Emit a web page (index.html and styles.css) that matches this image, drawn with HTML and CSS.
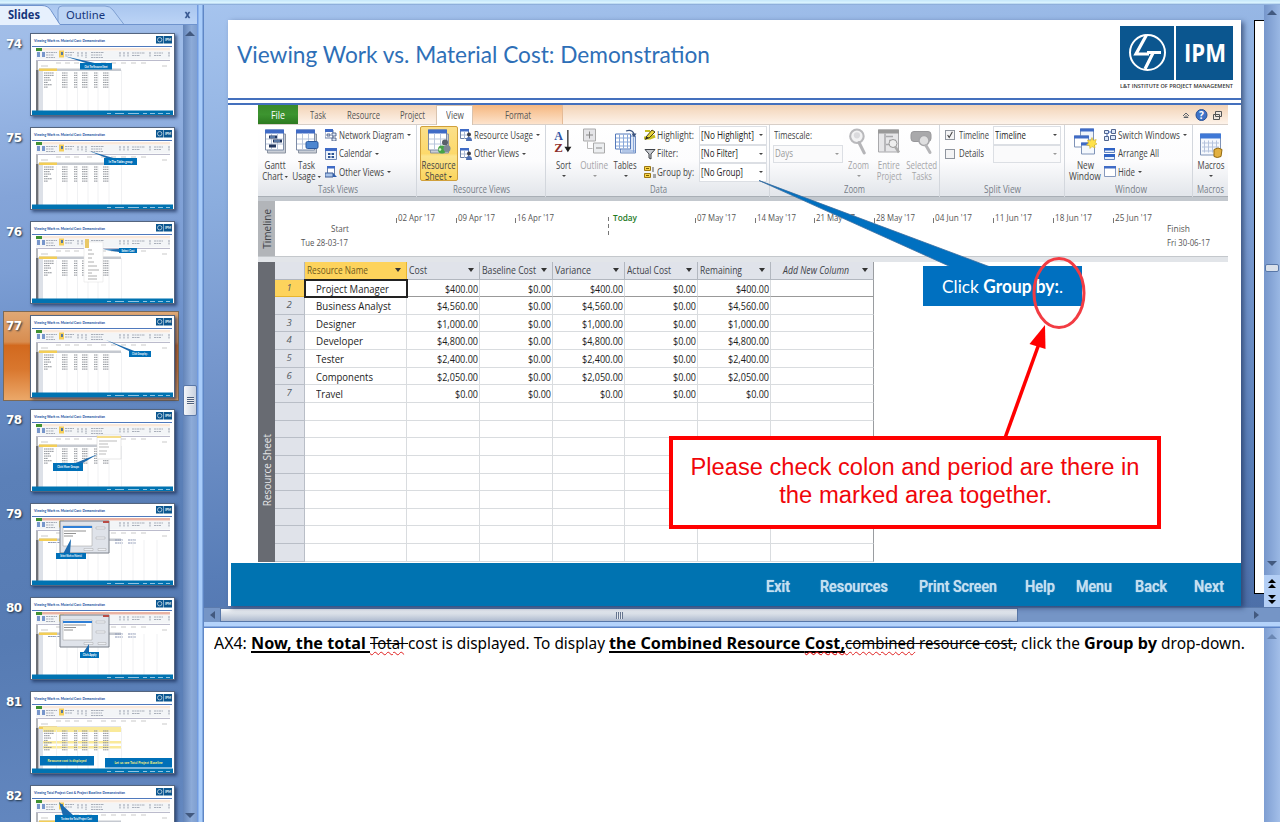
FILE: index.html
```html
<!DOCTYPE html>
<html lang="en">
<head>
<meta charset="utf-8">
<title>Presentation editor</title>
<link rel="stylesheet" href="styles.css">
</head>
<body>
<svg class="defs" width="0" height="0">
  <defs>
    <symbol id="sheet" viewBox="0 0 24 26"><path d="M3.500 5.500h18v19h-18z" fill="#c9ced6" stroke="#8b93a0"/><path d="M1.500 1.500h18v20h-18z" fill="#fff" stroke="#7c8ba6"/><path d="M1 1h19v4H1z" fill="#3f6bc6"/><path d="M7.500 5v16M13.500 5v16M2 10.500h17M2 15.500h17" stroke="#b9c6dc"/></symbol>
    <symbol id="gantt" viewBox="0 0 24 26"><use href="#sheet"/><path d="M5 7h8v3H5zM9 11h9v3H9zM5 16h7v3H5z" fill="#22365e"/><path d="M6 8h5v1H6zM10 12h6v1h-6z" fill="#8fb8ea"/></symbol>
    <symbol id="usage" viewBox="0 0 24 26"><use href="#sheet"/><rect x="11" y="13" width="12" height="7" rx="1.500" fill="#4d86d0" stroke="#2c5a9f"/></symbol>
    <symbol id="ressheet" viewBox="0 0 24 26"><use href="#sheet"/><circle cx="18" cy="14" r="3" fill="#59606b"/><circle cx="15" cy="21" r="4" fill="#47a447"/><circle cx="20" cy="20" r="3.500" fill="#7d8895"/><circle cx="13" cy="21" r="1.300" fill="#d6f0d0"/></symbol>
    <symbol id="net" viewBox="0 0 12 12"><path d="M0 1h8v8H0z" fill="#fff" stroke="#6a7fa5"/><path d="M0 0h8v3H0z" fill="#3f6bc6"/><path d="M2 5h3v2H2zM7 4h4v3H7zM7 9h4v3H7z" fill="#dfe8f6" stroke="#3a4f78" stroke-width=".8"/></symbol>
    <symbol id="cal" viewBox="0 0 12 12"><path d="M.500.500h11v11H.500z" fill="#e9f0fa" stroke="#7289b5"/><path d="M0 0h12v3H0z" fill="#3f6bc6"/><path d="M3 5h6v5H3z" fill="#2d5595"/><path d="M6 4v7M2 7.500h8" stroke="#fff"/></symbol>
    <symbol id="oth" viewBox="0 0 12 12"><path d="M2.500.500h7v9h-7z" fill="#fff" stroke="#6a7fa5"/><path d="M2 0h8v2.500H2z" fill="#3f6bc6"/><path d="M0 7h8v4H0z" fill="#a9c4ea" stroke="#3a5b95"/><path d="M8 7l4 4H8z" fill="#2e5fae"/></symbol>
    <symbol id="resv" viewBox="0 0 12 12"><path d="M.500.500h8v9h-8z" fill="#fff" stroke="#6a7fa5"/><path d="M0 0h9v2.500H0z" fill="#3f6bc6"/><path d="M4.500 3v7M1 6h7" stroke="#a9b8d3"/><circle cx="9" cy="5.500" r="2" fill="#3a3d49"/><path d="M6 12q0-4 3-4t3 4z" fill="#4d6fb3"/></symbol>
    <symbol id="sort" viewBox="0 0 20 28"><text x="0" y="12" font-size="14" font-weight="bold" font-family="Liberation Serif,serif" fill="#2f55a4" textLength="9" lengthAdjust="spacingAndGlyphs">A</text><text x="0" y="25" font-size="14" font-weight="bold" font-family="Liberation Serif,serif" fill="#8d2f2c" textLength="9" lengthAdjust="spacingAndGlyphs">Z</text><path d="M14 2v20M11.500 20l2.500 4 2.500-4z" stroke="#222" stroke-width="1.300"/></symbol>
    <symbol id="outl" viewBox="0 0 24 26"><path d="M.500.500h12v12H.500z" fill="#e5e5e8" stroke="#aaa"/><path d="M6.500 3v7M3 6.500h7" stroke="#888"/><path d="M10.500 14.500h11v10h-11z" fill="#eceef0" stroke="#aaa"/><path d="M13 19.500h6" stroke="#888"/><path d="M4.500 13v7h5" stroke="#bbb" fill="none"/></symbol>
    <symbol id="tabl" viewBox="0 0 24 26"><path d="M6.500 7.500h15v17h-15z" fill="#dce6f6" stroke="#6f8cc0"/><path d="M1.500 5.500h15v15h-15z" fill="#fff" stroke="#5379bb"/><path d="M5.500 6v14M9.500 6v14M13.500 6v14M2 9.500h14M2 13.500h14M2 17.500h14M19.500 9v15M8 22.500h13" stroke="#88a7d9"/><path d="M12 2.500q6-2 8 3" fill="none" stroke="#3c547e" stroke-width="1.300"/><path d="M17.500 5h5L20 9z" fill="#3c547e"/></symbol>
    <symbol id="hil" viewBox="0 0 12 12"><path d="M0 9h6l5-2" stroke="#c9bf22" stroke-width="3" fill="none"/><path d="M2 8l6-7 3 2-6 6z" fill="#e8d43a" stroke="#4e4614"/><path d="M2 8l3 1-4 2z" fill="#222"/><path d="M1 2h5" stroke="#c9bf22" stroke-width="2"/></symbol>
    <symbol id="fun" viewBox="0 0 12 12"><path d="M1 1.500h10L7 6v5l-2-1V6z" fill="#c9ccd1" stroke="#3f4349"/></symbol>
    <symbol id="grp" viewBox="0 0 12 12"><path d="M.500.500h6v4h-6zM.500 7.500h6v4h-6z" fill="#f7d44a" stroke="#9c7712"/><path d="M2 2.500h3M2 9.500h3" stroke="#7a5a00"/><path d="M9 1v5M9 9h3M9 11h3" stroke="#555"/></symbol>
    <symbol id="zoo" viewBox="0 0 22 26"><circle cx="9" cy="8" r="6.500" fill="#f2f2f3" stroke="#b9b9bc" stroke-width="2"/><circle cx="9" cy="7" r="3" fill="#dadadd"/><path d="M11 14l5 10" stroke="#b5b5b8" stroke-width="3" stroke-linecap="round"/></symbol>
    <symbol id="ent" viewBox="0 0 24 26"><path d="M1.500 1.500h20v22h-20z" fill="#e6e6e8" stroke="#a9a9ac"/><path d="M1 1h21v4H1z" fill="#999"/><path d="M8 5v18M9 8h7M12 12h7M9 16h7" stroke="#a9a9ac" stroke-width="1.500"/><circle cx="16" cy="15" r="4" fill="#eee" stroke="#999"/><path d="M18 18l4 6" stroke="#aaa" stroke-width="2.500"/></symbol>
    <symbol id="sel" viewBox="0 0 24 26"><rect x="1" y="3" width="20" height="10" rx="3" fill="#a9a9ab" stroke="#98989b"/><circle cx="14" cy="12" r="5" fill="#dfdfe0" stroke="#a5a5a8" stroke-width="1.500"/><path d="M16 17l4 7" stroke="#b5b5b8" stroke-width="3" stroke-linecap="round"/></symbol>
    <symbol id="neww" viewBox="0 0 24 26"><path d="M7.500.500h13v11h-13z" fill="#eef3fb" stroke="#7f93b7"/><path d="M7 0h14v3H7z" fill="#3f6bc6"/><path d="M1.500 7.500h14v11h-14z" fill="#fff" stroke="#7f93b7"/><path d="M1 7h15v3H1z" fill="#3f6bc6"/><path d="M8.500 14.500h13v11h-13z" fill="#f4f8fd" stroke="#7f93b7"/><path d="M8 14h14v3H8z" fill="#3f6bc6"/><path d="M19 9l1.200 3 3-1-1 3 1.800 1.500-2.500 1 .500 3-3-1.500-2 2-.500-3-3-.500 2-2-1-3 3 1z" fill="#ffe24a" stroke="#d4b026" stroke-width=".6"/></symbol>
    <symbol id="sww" viewBox="0 0 12 12"><path d="M.500 1.500h4v3h-4zM7.500.500h4v4h-4zM.500 7.500h4v4h-4zM6.500 6.500h5v4h-5z" fill="#dce8fa" stroke="#50648e"/><path d="M4 3h3M3 5v2" stroke="#3f6bc6"/></symbol>
    <symbol id="arr" viewBox="0 0 12 12"><path d="M.500.500h10v4h-10zM.500 6.500h10v5h-10z" fill="#e9f1fc" stroke="#6483bd"/><path d="M0 0h11v2.500H0zM0 6h11v3H0z" fill="#2f62c4"/></symbol>
    <symbol id="hid" viewBox="0 0 12 12"><path d="M.500.500h11v10H.500z" fill="#fff" stroke="#8699bd"/><path d="M0 0h12v2.500H0z" fill="#3f6bc6"/></symbol>
    <symbol id="mac" viewBox="0 0 24 26"><path d="M1.500 1.500h20v21h-20z" fill="#f5f8fd" stroke="#7f93b7"/><path d="M1 1h21v5H1z" fill="#3f78d6"/><path d="M5.500 8v12M9.500 8v12M13.500 8v12M17.500 8v12M3 10.500h17M3 14.500h17M3 18.500h17" stroke="#b5c3dd"/><path d="M15 17q4-3 8 0l-1 7q-4 2-7 0z" fill="#e2b040" stroke="#93690f"/></symbol>
  </defs>
</svg>

<div class="app">
  <div class="topstrip"></div>
  <aside class="side">
    <header class="side-head">
      <svg width="197" height="20" viewBox="0 0 197 20" font-family="Noto Sans,sans-serif" font-size="11.500">
        <path d="M58 20V5q0-4 4-4h43q5 0 8 4l11 14.500z" fill="#bdd5f5" stroke="#7fa0d2"/>
        <path d="M0 20V.500h42q6 0 9 5l9 14.500z" fill="#e6f0fd"/><path d="M0 .500h42q6 0 9 5l9 14h137" fill="none" stroke="#6f93cd"/>
        <text x="8" y="14" font-weight="bold" fill="#15357a" textLength="32" lengthAdjust="spacingAndGlyphs">Slides</text>
        <text x="66" y="14" fill="#15357a" textLength="39" lengthAdjust="spacingAndGlyphs">Outline</text>
        <path d="M185 7h1.500l1 2 1-2h1.500l-1.700 3 1.700 3h-1.500l-1-2-1 2H185l1.700-3z" fill="#35568f" stroke="#35568f" stroke-width=".4"/>
      </svg>
    </header>
    <div class="side-body">
      <ol class="thumbs" id="thumbs"></ol>
      <div class="vbar"><i class="up"></i><b class="grip"></b><i class="down"></i></div>
    </div>
  </aside>
  <div class="vsplit"></div>
  <main class="main">
    <section class="stage">
      <div class="slide">
        <header class="slide-head">
          <h1><span data-w="473">Viewing Work vs. Material Cost: Demonstration</span></h1>
          <div class="logo">
            <div class="logo-row">
              <div class="lt"><svg width="54" height="54" viewBox="0 0 54 54"><circle cx="27.500" cy="26.500" r="17.500" fill="none" stroke="#fff" stroke-width="2"/><path d="M26.500 9L16 28h13M25 43l8.500-17M27 26.500h14" fill="none" stroke="#fff" stroke-width="3.200"/></svg></div>
              <div class="ipm"><span data-w="42">IPM</span></div>
            </div>
            <div class="logo-cap"><span data-w="113">L&amp;T INSTITUTE OF PROJECT MANAGEMENT</span></div>
          </div>
        </header>
        <div class="rules"></div>
        <div class="shot">
          <nav class="tabs">
            <div class="tab file"><span data-w="14">File</span></div><div class="tab t-task"><span data-w="16">Task</span></div><div class="tab t-res"><span data-w="33">Resource</span></div><div class="tab t-proj"><span data-w="25">Project</span></div><div class="tab view"><span data-w="18">View</span></div><div class="tab format"><span data-w="26">Format</span></div>
            <div class="tab-tools"><svg width="42" height="14" viewBox="0 0 42 14"><path d="M1 8l3-3 3 3M2 9.500l2-2 2 2z" fill="none" stroke="#5b6169"/><circle cx="19.500" cy="7" r="5.500" fill="#3f74c8" stroke="#2a5296"/><text x="17" y="10.700" font-size="10" font-weight="bold" fill="#fff" font-family="Noto Sans,sans-serif">?</text><path d="M33.500 3.500h6v5h-6zM31.500 6.500h6v5h-6z" fill="#eee6de" stroke="#555"/></svg></div>
          </nav>
          <div class="ribbon">
            <div class="group g-task"><div class="gb">
              <div class="big"><svg><use href="#gantt"/></svg><span data-w="21">Gantt</span><span data-w="26">Chart <u></u></span></div>
              <div class="big"><svg><use href="#usage"/></svg><span data-w="17">Task</span><span data-w="29">Usage <u></u></span></div>
              <div class="smalls"><p><svg><use href="#net"/></svg><span data-w="65">Network Diagram</span><u></u></p><p><svg><use href="#cal"/></svg><span data-w="33">Calendar</span><u></u></p><p><svg><use href="#oth"/></svg><span data-w="45">Other Views</span><u></u></p></div>
            </div><footer><span data-w="40">Task Views</span></footer></div>
            <div class="group g-res"><div class="gb">
              <div class="big hot"><svg><use href="#ressheet"/></svg><span data-w="34">Resource</span><span data-w="27">Sheet <u></u></span></div>
              <div class="smalls"><p><svg><use href="#resv"/></svg><span data-w="59">Resource Usage</span><u></u></p><p><svg><use href="#resv"/></svg><span data-w="45">Other Views</span><u></u></p></div>
            </div><footer><span data-w="57">Resource Views</span></footer></div>
            <div class="group g-data"><div class="gb">
              <div class="big"><svg><use href="#sort"/></svg><span data-w="15">Sort</span><u></u></div>
              <div class="big dim"><svg><use href="#outl"/></svg><span data-w="28">Outline</span><u></u></div>
              <div class="big"><svg><use href="#tabl"/></svg><span data-w="23">Tables</span><u></u></div>
              <div class="smalls"><p><svg><use href="#hil"/></svg><span data-w="37">Highlight:</span></p><p><svg><use href="#fun"/></svg><span data-w="21">Filter:</span></p><p><svg><use href="#grp"/></svg><span data-w="37">Group by:</span></p></div>
              <div class="combos"><p><span data-w="53">[No Highlight]</span><u></u></p><p><span data-w="37">[No Filter]</span><u></u></p><p><span data-w="42">[No Group]</span><u></u></p></div>
            </div><footer><span data-w="17">Data</span></footer></div>
            <div class="group g-zoom"><div class="gb">
              <div class="combos"><p class="plain"><span data-w="38">Timescale:</span></p><p class="dim"><span data-w="18">Days</span><u></u></p></div>
              <div class="big dim"><svg><use href="#zoo"/></svg><span data-w="21">Zoom</span><u></u></div>
              <div class="big dim"><svg><use href="#ent"/></svg><span data-w="22">Entire</span><span data-w="25">Project</span></div>
              <div class="big dim"><svg><use href="#sel"/></svg><span data-w="31">Selected</span><span data-w="20">Tasks</span></div>
            </div><footer><span data-w="21">Zoom</span></footer></div>
            <div class="group g-split"><div class="gb">
              <div class="smalls"><p><i class="chk"><svg viewBox="0 0 10 10"><path d="M2 5l2 3 4-7" fill="none" stroke="#444" stroke-width="1.300"/></svg></i><span data-w="30">Timeline</span></p><p><i class="chk"></i><span data-w="25">Details</span></p></div>
              <div class="combos"><p><span data-w="31">Timeline</span><u></u></p><p class="dim"><span></span><u></u></p></div>
            </div><footer><span data-w="37">Split View</span></footer></div>
            <div class="group g-win"><div class="gb">
              <div class="big"><svg><use href="#neww"/></svg><span data-w="17">New</span><span data-w="32">Window</span></div>
              <div class="smalls"><p><svg><use href="#sww"/></svg><span data-w="62">Switch Windows</span><u></u></p><p><svg><use href="#arr"/></svg><span data-w="41">Arrange All</span></p><p><svg><use href="#hid"/></svg><span data-w="17">Hide</span><u></u></p></div>
            </div><footer><span data-w="32">Window</span></footer></div>
            <div class="group g-mac"><div class="gb">
              <div class="big"><svg><use href="#mac"/></svg><span data-w="27">Macros</span><u></u></div>
            </div><footer><span data-w="27">Macros</span></footer></div>
          </div>
          <div class="timeline"><div class="vlabel"><span>Timeline</span></div><svg id="tl" width="953" height="56" viewBox="275 201 953 56"></svg></div>
          <div class="sheet"><div class="vlabel dark"><span>Resource Sheet</span></div><div class="grid" id="grid"></div></div>
        </div>
        <div class="navbar">
          <span data-w="24">Exit</span><span data-w="68">Resources</span><span data-w="78">Print Screen</span><span data-w="30">Help</span><span data-w="36">Menu</span><span data-w="32">Back</span><span data-w="30">Next</span>
        </div>
      </div>
      <div class="next-slide"></div>
      <div class="vbar right"><i class="up"></i><b class="grip small"></b><i class="down"></i>
        <svg class="pager" width="16" height="32" viewBox="0 0 16 32"><path d="M4 8l4-4 4 4zM4 13l4-4 4 4zM4 20h8l-4 4zM4 25h8l-4 4z" fill="#000"/></svg></div>
      <svg class="callout-tail" width="240" height="92" viewBox="755 178 240 92"><path d="M759 180.500L950 266.500h39z" fill="#0070c0" stroke="#3a6d9f" stroke-width=".8"/></svg>
      <div class="callout"><span data-w="121">Click <b>Group by:</b>.</span></div>
      <svg class="marks" width="100" height="190" viewBox="1000 252 100 190"><ellipse cx="1059" cy="293" rx="25" ry="34.500" fill="none" stroke="#f23c43" stroke-width="3"/><path d="M1005 438l35-97" stroke="#f00" stroke-width="3.500"/><path d="M1045 325l.500 24-16-5z" fill="#f00"/></svg>
      <div class="note"><span data-w="449">Please check colon and period are there in</span><span data-w="273">the marked area together.</span></div>
    </section>
    <div class="hbar"><i class="left"></i><b></b><i class="rightarr"></i></div>
    <div class="hsplit"></div>
    <section class="notes">
      <p><span data-w="37">AX4: </span><span class="ins" data-w="119">Now, the total </span><span class="del" data-w="38"><em>Total</em> </span><span data-w="201">cost is displayed. To display </span><span class="ins" data-w="236">the Combined Resource <em>Cost,</em></span><span class="del" data-w="172"><em>combined</em> resource cost,</span><span data-w="67"> click the </span><b data-w="73">Group by</b><span data-w="88"> drop-down.</span></p>
      <div class="vbar faint"><i class="up"></i></div>
    </section>
  </main>
</div>
<script src="app.js"></script>
</body>
</html>
```

FILE: styles.css
```css
* { box-sizing: border-box; }
body { margin: 0; width: 1280px; height: 822px; overflow: hidden; font-family: "Noto Sans", sans-serif; }
.defs { position: absolute; }
p, h1, ol { margin: 0; padding: 0; font-weight: normal; }
[data-w] { display: inline-block; white-space: pre; flex: none; }
.app { display: grid; grid-template: 5px 817px / 197px 7px 1076px; background: #6b8fc6; }
.topstrip { grid-column: 1 / 4; background: linear-gradient(#c9e9fb 0 1px, #d9f3fe 2px 3px, #7699d0 5px); }

/* slide list */
.side { display: flex; flex-direction: column; }
.side-head { height: 20px; background: linear-gradient(#a9c6ef, #bcd4f6); }
.side-head svg { display: block; }
.side-body { flex: 1; display: flex; background: linear-gradient(172deg, #a2bee8 0, #9dbbe8 6%, #84a4d8 21%, #7c9ed4 30%, #688cc6 42%, #5b80b8 55%, #567bb3 75%, #6488c0 100%); }
.thumbs { list-style: none; width: 183px; height: 797px; overflow: hidden; padding-top: 3px; }
.thumbs li { height: 94px; display: flex; gap: 9px; padding: 5px 0 0 6px; color: #fff; font: bold 12px "DejaVu Sans", sans-serif; }
.thumbs li > span { width: 15px; padding-top: 4px; letter-spacing: -.5px; text-shadow: 1px 1px 2px #234; }
.thumbs li > svg { width: 145px; height: 83px; border: 1px solid #54657f; background: #fff; box-shadow: 2px 2px 3px rgba(20,40,80,.65); }
.thumbs li.current { margin: 1px 4px 3px 3px; height: 90px; padding: 3px 0 0 2px; border: 1px solid #7d6a56; background: linear-gradient(#e0a875, #d88d50 34%, #d2691e 38%, #d9772e 65%, #eba869); }
.vbar { width: 14px; display: flex; flex-direction: column; align-items: center; justify-content: space-between; background: linear-gradient(90deg, #6384b8, #8dabd8 60%, #7f9fd0); }
.up, .down { width: 0; height: 0; border: 5px solid transparent; }
.up { border-bottom-color: #42597f; margin-top: 1px; }
.down { border-top-color: #42597f; margin-bottom: -1px; }
.side .up { margin-bottom: 349px; }
.side .down { margin-top: auto; }
.grip { width: 14px; height: 31px; border: 1px solid #5877a8; border-radius: 2px; background: repeating-linear-gradient(#4d607f 0 1px, #eee 1px 2px) center / 7px 8px no-repeat, linear-gradient(90deg, #f4f6f9, #c7d0df); }
.vsplit { background: linear-gradient(90deg, #719be0 0 1px, #a9cdfa 2px 5px, #5f87c6 6px 7px); }

/* editing area */
.main { display: grid; grid-template-rows: 602px 15px 6px 194px; }
.stage { position: relative; display: flex; background: linear-gradient(174deg, #a6c4ee 0, #8badde 28%, #7697cd 50%, #587db7 80%, #4d6fa8); }
.slide { margin: 15px 13px 0 24px; width: 1013px; height: 586px; background: #fff; box-shadow: 3px 2px 5px rgba(30,50,90,.65); display: flex; flex-direction: column; }
.slide-head { height: 77px; padding: 6px 8px 0 9px; display: flex; justify-content: space-between; flex: none; }
h1 { font: 24px/30px Lato, sans-serif; color: #2e6fb7; padding-top: 13px; }
.logo { width: 113px; }
.logo-row { height: 54px; display: flex; gap: 2px; }
.lt, .ipm { width: 54px; height: 54px; background: #0b568f; }
.ipm { width: 57px; color: #fff; font: bold 25px/53px "Open Sans", sans-serif; text-align: center; }
.logo-cap { color: #333; font: 600 6px/12px "Open Sans", sans-serif; }
.rules { height: 7px; border: solid #4470bd; border-width: 2px 0; margin-top: 1px; flex: none; }
.shot { margin: 0 13px 1px 30px; width: 970px; height: 457px; flex: none; }
.tabs { height: 20px; display: flex; background: linear-gradient(#f3d3b6, #fdf3ea); font: 10px/20px "Open Sans", sans-serif; color: #555; border-bottom: 1px solid #d8cfc8; }
.tab { width: 40px; text-align: center; }
.file { background: linear-gradient(#3a8a2a, #3d9430 50%, #2c7a20); color: #fff; }
.t-res { width: 51px; }
.t-proj { width: 47px; }
.view { width: 37px; height: 20px; background: #fff; border: 1px solid #d9c3ae; border-bottom: 0; line-height: 18px; }
.format { width: 90px; background: linear-gradient(#f5b77f, #fde3cc); border-right: 1px solid #e5bb97; }
.tab-tools { margin-left: auto; width: 46px; line-height: 0; padding-top: 3px; }

.ribbon { height: 76px; display: flex; background: linear-gradient(#fff, #fcfcfd 50%, #e4e7ec 95%); border-bottom: 4px solid #c3c8ce; box-shadow: inset 0 -1px #a9afb6; font: 10px/11px "Open Sans", sans-serif; color: #444; }
.group { display: flex; flex-direction: column; border-right: 1px solid #d3d7dd; flex: none; }
.gb { display: flex; height: 58px; }
.group footer { text-align: center; color: #777e88; line-height: 13px; }
.g-task { width: 159px; padding-left: 2px; }
.g-res { width: 129px; }
.g-data { width: 224px; padding-left: 2px; }
.g-zoom { width: 170px; }
.g-split { width: 125px; }
.g-win { width: 128px; padding-left: 4px; }
.g-mac { width: 35px; border: 0; }
.big { width: 31px; display: flex; flex-direction: column; align-items: center; padding-top: 3px; flex: none; }
.big svg { width: 24px; height: 27px; margin-bottom: 5px; flex: none; }
.big > u { margin-top: 4px; }
.ribbon u { display: inline-block; border: 2px solid transparent; border-top-color: #444; border-bottom: 0; vertical-align: 2px; }
.ribbon .dim u { border-top-color: #999; }
.dim { color: #a5a5a8; }
.hot { width: 38px; height: 55px; margin: 1px 0 0 3px; padding-top: 1px; border: 1px solid #d0a03c; border-radius: 2px; background: linear-gradient(#fbe08a, #fdd96b 50%, #fce58f 55%, #fbd45c); }
.g-zoom .big { width: 30px; }
.g-zoom .big:last-child { width: 36px; }
.g-win .big { width: 32px; }
.g-mac .big { width: 36px; padding-top: 7px; }
.g-mac .big svg { margin-bottom: 1px; }
.smalls { padding: 1px 0 0 3px; flex: none; }
.smalls p { height: 18.500px; display: flex; align-items: center; gap: 3px; }
.smalls svg { width: 12px; height: 12px; flex: none; }
.smalls [data-w] { margin-left: -1px; }
.g-res .smalls { padding-left: 2px; }
.g-data .smalls { width: 58px; padding-left: 3px; }
.g-data .smalls p { gap: 2px; }
.g-split .smalls { width: 53px; padding-left: 5px; }
.g-split .smalls p { gap: 5px; }
.combos { padding-top: 1px; width: 68px; flex: none; }
.combos p { height: 18.500px; padding: 0 3px 0 1px; border: 1px solid #dcdfe4; background: #fff; color: #222; display: flex; justify-content: space-between; align-items: center; }
.combos p.dim { color: #999; background: #fafafb; }
.combos p.plain { border-color: transparent; color: #444; padding-left: 0; }
.g-zoom .combos { margin: 0 1px 0 3px; width: 70px; }
.chk { width: 10px; height: 10px; border: 1px solid #8f959e; background: #f4f4f5; }
.chk svg { width: 8px; height: 8px; display: block; }

.timeline { height: 56px; display: flex; border-bottom: 1px solid #c4c8cc; }
.vlabel { width: 17px; background: #b2b5b9; display: flex; align-items: center; justify-content: center; font: 10px/16px "Open Sans", sans-serif; color: #43464b; }
.vlabel span { writing-mode: vertical-rl; transform: rotate(180deg); }
.vlabel.dark { background: #686b72; color: #e4e5e7; align-items: flex-end; padding-bottom: 56px; }
.sheet { height: 305px; display: flex; border-top: 5px solid #e2e5e9; }
.grid { display: grid; grid-template-columns: 30px 102px 73px 73px 72px 73px 73px 103px; grid-template-rows: 17.500px repeat(16, 17.650px); font: 11px/17px "Open Sans", sans-serif; color: #1c1c1c; }
.grid div { border: solid #d9dcdf; border-width: 0 1px 1px 0; text-align: right; padding-right: 1px; min-width: 0; }
.grid .h { background: #e0e3ea; border-color: #b2b7bf; display: flex; justify-content: space-between; align-items: center; font-size: 10px; color: #3e4249; padding: 0 5px 0 2px; }
.grid .h u { border: 3px solid transparent; border-top: 4px solid #333; border-bottom: 0; }
.grid .h.gold, .grid .id.gold { background: #fdd35c; border-color: #e7b52e; }
.grid .h.gold { color: #6f5a1c; }
.grid .id { background: #e0e3ea; border-color: #b9bec7; text-align: center; font-style: italic; font-size: 9.500px; line-height: 16px; color: #555b64; }
.grid .name { text-align: left; padding-left: 11px; }
.grid .first { border-bottom-color: #999; }
.grid .selcell { outline: 2px solid #222; outline-offset: -1px; z-index: 1; }
.grid .add { font-style: italic; padding-left: 12px; }
.grid .last { border-right-color: #9a9da1; }

.navbar { height: 43px; margin-left: 3px; padding-left: 535px; background: #0073b1; display: grid; grid-template-columns: 54px 99px 106px 51px 59px 59px 48px; justify-items: start; color: #c3dff0; font: 500 16px/47px Roboto, sans-serif; text-shadow: 0 0 1px #cfe6f4; flex: none; }
.next-slide { width: 10px; height: 574px; margin-top: 15px; background: #fff; border: 1px solid #000; border-width: 1px 0 1px 1px; }
.right { width: 16px; height: 602px; justify-content: flex-start; background: linear-gradient(90deg, #7696cb, #9ab8e4); }
.right .up { margin-top: 0; }
.right .down { margin-top: 289px; margin-bottom: 0; }
.small { width: 14px; height: 8px; margin-top: 249px; background: #d9e0ea; }
.pager { margin-top: 4px; background: #b3cef5; flex: none; }

/* annotations over the slide */
.callout-tail { position: absolute; left: 551px; top: 173px; }
.callout { position: absolute; left: 719px; top: 261px; width: 159px; height: 40px; padding-left: 19px; background: #0070c0; color: #fff; font: 18px/40px Lato, sans-serif; }
.marks { position: absolute; left: 796px; top: 247px; }
.note { position: absolute; left: 465px; top: 431px; width: 492px; height: 93px; border: 4px solid #f00; background: #fff; color: #f0060a; font: 23px/28px "Liberation Sans", sans-serif; display: flex; flex-direction: column; align-items: center; padding: 13px 0 0 1px; }

.hbar { display: flex; align-items: center; background: #7595c6; border-top: 1px solid #5c7bad; }
.hbar b { width: 798px; height: 14px; margin-left: 5px; border: 1px solid #5877a8; background: repeating-linear-gradient(90deg, #66758f 0 1px, #e5e9ef 1px 2px) center / 7px 7px no-repeat, linear-gradient(#f6f8fa, #d3dae4 50%, #aebacf); }
.left, .rightarr { border: 4px solid transparent; }
.left { border-right: 5px solid #42597f; margin-left: 2px; }
.rightarr { border-left: 5px solid #42597f; margin-left: 236px; }
.hsplit { background: linear-gradient(#b4d3fb 0 4px, #5b84c8 5px 6px); }
.notes { background: #fff; display: flex; justify-content: space-between; }
.notes p { padding: 3px 0 0 10px; font: 16px/25px "Noto Sans", sans-serif; color: #000; white-space: nowrap; }
.notes p * { vertical-align: top; }
.notes em { font-style: normal; text-decoration: underline wavy #e02020 1px; text-underline-offset: 2px; vertical-align: baseline !important; }
.ins { font-weight: bold; text-decoration: underline 2px; text-underline-offset: 2px; text-decoration-skip-ink: none; }
.del { text-decoration: line-through 1px; }
.faint { width: 16px; justify-content: flex-start; background: linear-gradient(90deg, #7e9ed2, #a3bfe9); }
.faint .up { border-bottom-color: #6b87b3; }
```

FILE: app.js
```js
const rows = [
  ['Project Manager', '$400.00', 73], ['Business Analyst', '$4,560.00', 75], ['Designer', '$1,000.00', 40],
  ['Developer', '$4,800.00', 47], ['Tester', '$2,400.00', 28], ['Components', '$2,050.00', 57], ['Travel', '$0.00', 27]
];
const heads = [['Resource Name', 61, 'gold'], ['Cost', 18, ''], ['Baseline Cost', 54, ''], ['Variance', 36, ''], ['Actual Cost', 44, ''], ['Remaining', 42, ''], ['Add New Column', 66, 'add last']];
const money = v => `<span data-w="${v.length === 5 ? 23 : v.length === 7 ? 33 : 41}">${v}</span>`;

// resource sheet
let cells = '<div class="h"></div>' + heads.map(h => `<div class="h ${h[2]}"><span data-w="${h[1]}">${h[0]}</span><u></u></div>`).join('');
for (let i = 0; i < 16; i++) {
  const r = rows[i], f = i ? '' : ' first';
  cells += `<div class="id${i ? '' : ' gold'}">${r ? i + 1 : ''}</div>`;
  cells += `<div class="name${i ? '' : ' selcell'}">${r ? `<span data-w="${r[2]}">${r[0]}</span>` : ''}</div>`;
  for (let c = 0; c < 5; c++) cells += `<div class="${f}">${r ? money(c === 1 || c === 3 ? '$0.00' : r[1]) : ''}</div>`;
  cells += `<div class="last${f}"></div>`;
}
document.getElementById('grid').innerHTML = cells;

// timeline scale
const ticks = [[397, '02 Apr \'17'], [457, '09 Apr \'17'], [516, '16 Apr \'17'], [696, '07 May \'17'], [756, '14 May \'17'], [815, '21 May \'17'], [875, '28 May \'17'], [934, '04 Jun \'17'], [994, '11 Jun \'17'], [1054, '18 Jun \'17'], [1114, '25 Jun \'17']];
const txt = (x, y, w, s, extra = '') => `<text x="${x}" y="${y}" textLength="${w}" lengthAdjust="spacingAndGlyphs" ${extra}>${s}</text>`;
document.getElementById('tl').innerHTML = `<g font-family="Open Sans,sans-serif" font-size="9.5" fill="#555">` +
  ticks.map(([x, s]) => `<path d="M${x - .5} 218v5" stroke="#777"/>` + txt(x + 1, 220.5, s.includes('May') ? 39 : 37, s)).join('') +
  '<path d="M608.5 217v18" stroke="#777" stroke-dasharray="4 3"/>' + txt(613, 220.5, 24, 'Today', 'fill="#1f7a1f" font-weight="600"') +
  txt(331, 232, 18, 'Start') + txt(301, 246, 47, 'Tue 28-03-17') + txt(1167, 232, 23, 'Finish') + txt(1167, 246, 43, 'Fri 30-06-17') + '</g>';

// slide thumbnails
function thumb(n) {
  const dlg = n === 79 || n === 80, gold = n === 81;
  let s = `<g font-family="Lato,sans-serif"><text x="3" y="7.500" font-size="4.500" font-weight="900" fill="#2b57a5" textLength="${n === 82 ? 91 : 71}" lengthAdjust="spacingAndGlyphs">${n === 82 ? 'Viewing Total Project Cost &amp; Project Baseline: Demonstration' : 'Viewing Work vs. Material Cost: Demonstration'}</text>`;
  s += '<path d="M125 2h7.500v7.500H125zM133 2h8v7.500h-8z" fill="#0b568f"/><circle cx="128.700" cy="5.700" r="2.200" fill="none" stroke="#fff" stroke-width=".6"/><text x="134" y="7.300" font-size="4" font-weight="bold" fill="#fff" textLength="6" lengthAdjust="spacingAndGlyphs">IPM</text>';
  s += `<path d="M1 12.500h140" stroke="#4f79bd"/><path d="M5 14h134v2.500H5z" fill="${dlg ? '#e9b3a4' : '#f9e8da'}"/><path d="M5 14h6v3H5z" fill="#3f9132"/><path d="M5 17h134v8.500H5z" fill="#f3f5f7"/><path d="M5 26.500h134" stroke="#bbc"/>`;
  s += '<path d="M6 18h3v5H6zM11 18h3v5h-3z" fill="#7796cb"/><path d="M28 16.500h5v7h-5z" fill="#f5cf5c"/><path d="M30 18h2v3h-2z" fill="#57799f"/>';
  s += '<path d="M15 18.500h11M15 21h8M15 23.500h9M34 18.500h9M34 21h7M47 18v5M51 18v5M55 18v6M60 18.500h13M60 21h11M60 23.500h12M89 18v5M93 18v5M97 18v5M101 19h13M101 21.500h8M119 18v5M123 19h9M123 21.500h7M138 18v5" stroke="#a9afba" stroke-width="1.200" stroke-dasharray="2 .5"/>';
  s += '<path d="M5 27h2v8H5z" fill="#b4b7bb"/><path d="M5 35.500h2.500V77H5z" fill="#6c6f75"/><path d="M8 35.500h4V77H8z" fill="#dde1e8"/><path d="M10 32h7M25 29h5M34 29h5M43 29h5M56 29h5M70 29h5M80 29h5M90 29h5M100 29h5M110 29h5M131 32h5" stroke="#bbb" stroke-width=".8"/>';
  s += `<path d="M8 34.500h82v2.500H8z" fill="#c5c9d0"/><path d="M8 34.500h18v2.500H8z" fill="#f3ce57"/>`;
  if (dlg) s += '<path d="M17 38.500h13M84 36h8M97 36h8M84 39h8M97 39h8" stroke="#8d98b5" stroke-width="1.200" stroke-dasharray="2 .4"/>';
  else {
    if (gold) s += '<path d="M12 35h78v5H12zM12 49h78v2.500H12zM12 54h78v2.500H12z" fill="#faea9a"/>';
    for (let r = 0; r < (gold ? 9 : 7); r++) { const y = 39 + r * 2.35; s += `<path d="M13 ${y}h${[10, 10, 6, 7, 4, 8, 4, 8, 6][r]}M31 ${y}h6M43 ${y}h4M51 ${y}h6M63 ${y}h4M72 ${y}h6" stroke="#8f9399" stroke-width="1" stroke-dasharray="1.6 .3"/>`; }
  }
  s += `<path d="M25.500 38v39M36 38v39M46.500 38v39M57 38v39M67 38v39M78 38v39M90.500 36v41${dlg ? 'M102 36v41M113 36v41M126 36v41' : ''}" stroke="#eceef0" stroke-width=".8"/>`;
  s += '<path d="M1 76.500h141V81H1z" fill="#0073b1"/><path d="M76 79.500h4M84 79.500h9M97 79.500h11M112 79.500h4M119 79.500h5M127 79.500h5M135 79.500h4" stroke="#8fc3e2" stroke-width="1"/>';
  const box = (x, y, w, h, t, tail, fs = 3.6, c = '#fff') => (tail ? `<path d="${tail}" fill="#1c6aae"/>` : '') + `<path d="M${x} ${y}h${w}v${h}h${-w}z" fill="#0070b8"/><text x="${x + w / 2}" y="${y + h / 2 + 1.3}" text-anchor="middle" font-size="${fs}" font-weight="bold" fill="${c}" textLength="${w * .72}" lengthAdjust="spacingAndGlyphs">${t}</text>`;
  if (n === 74) s += box(49, 29, 32, 6.5, 'Click The Resource Sheet', 'M33 22l25 8h10z');
  if (n === 75) s += box(73, 30, 33, 7, 'In The Tables group', 'M58 23l20 8h8z');
  if (n === 76) s += '<path d="M53 20h19v40H53z" fill="#fff" stroke="#ddd" stroke-width=".5"/><path d="M54 17h4v9h-4z" fill="#e9c866"/>' + '<path d="M57 28h4M57 32h6M57 36h4M57 40h6M57 44h9M57 48h11M57 51h4M57 54h9M57 57h9" stroke="#999" stroke-width=".8"/>' + box(88, 26, 18, 5, 'Select Cost', 'M72 27.500l16-.5v3z');
  if (n === 77) s += box(98, 35, 22, 6, 'Click Group by:.', 'M75 24l25 12h6z');
  if (n === 78) s += '<path d="M66 25h24v24H66z" fill="#fff" stroke="#ccc" stroke-width=".5"/><path d="M66 26h24v2H66z" fill="#f5dd8a"/><path d="M68 31h18M68 34h9M68 37h10M68 41h8M68 44h7" stroke="#aaa" stroke-width=".8"/>' + box(22, 53, 30, 8, 'Click More Groups', 'M67 44L50 54h-8z');
  if (dlg) s += `<path d="M29 17h49v32H29z" fill="#dfe3ea" stroke="#7b808a"/><path d="M72 17h6v2h-6z" fill="#b94b45"/><path d="M32 22h29v20H32z" fill="#fff" stroke="#999" stroke-width=".5"/><path d="M32 ${n === 79 ? 22 : 23}h29v2H32z" fill="#2f7fd6"/><path d="M33 27h22M33 29.500h12M33 32h9" stroke="#777" stroke-width=".8"/><path d="M65 23h9v2h-9zM65 33h9v2h-9zM53 44.500h9v2h-9zM67 44.500h8v2h-8z" fill="#eef1f5" stroke="#999" stroke-width=".4"/>`;
  if (n === 79) s += box(25, 49, 30, 6, 'Select Work vs Material', 'M40 35l-8 15h7z');
  if (n === 80) s += box(49, 54, 19, 6, 'Click Apply', 'M58 46l-6 9h6z');
  if (gold) s += box(9, 64, 54, 9.5, 'Resource cost is displayed', '', 3.8, '#f6f27a') + box(74, 66, 67, 9.5, 'Let us see Total Project Baseline', '', 3.8, '#f6f27a');
  if (n === 82) s += box(24, 29, 43, 8, 'To view the Total Project Cost', 'M28 16l4 14h11z');
  return s + '</g>';
}
let list = '';
for (let n = 74; n <= 82; n++) list += `<li class="${n === 77 ? 'current' : ''}"><span>${n}</span><svg viewBox="0 0 143 81">${thumb(n)}</svg></li>`;
document.getElementById('thumbs').innerHTML = list;

document.querySelectorAll('[data-w]').forEach(el => {
  const nat = el.getBoundingClientRect().width;
  if (!nat) return;
  const w = +el.dataset.w, d = w - nat;
  const parent = getComputedStyle(el.parentElement);
  el.style.transform = `scaleX(${w / nat})`;
  if (parent.flexDirection === 'column' && parent.display === 'flex') {
    el.style.marginInline = d / 2 + 'px';
  } else {
    el.style.transformOrigin = 'left';
    el.style.marginRight = d + 'px';
  }
});
```
